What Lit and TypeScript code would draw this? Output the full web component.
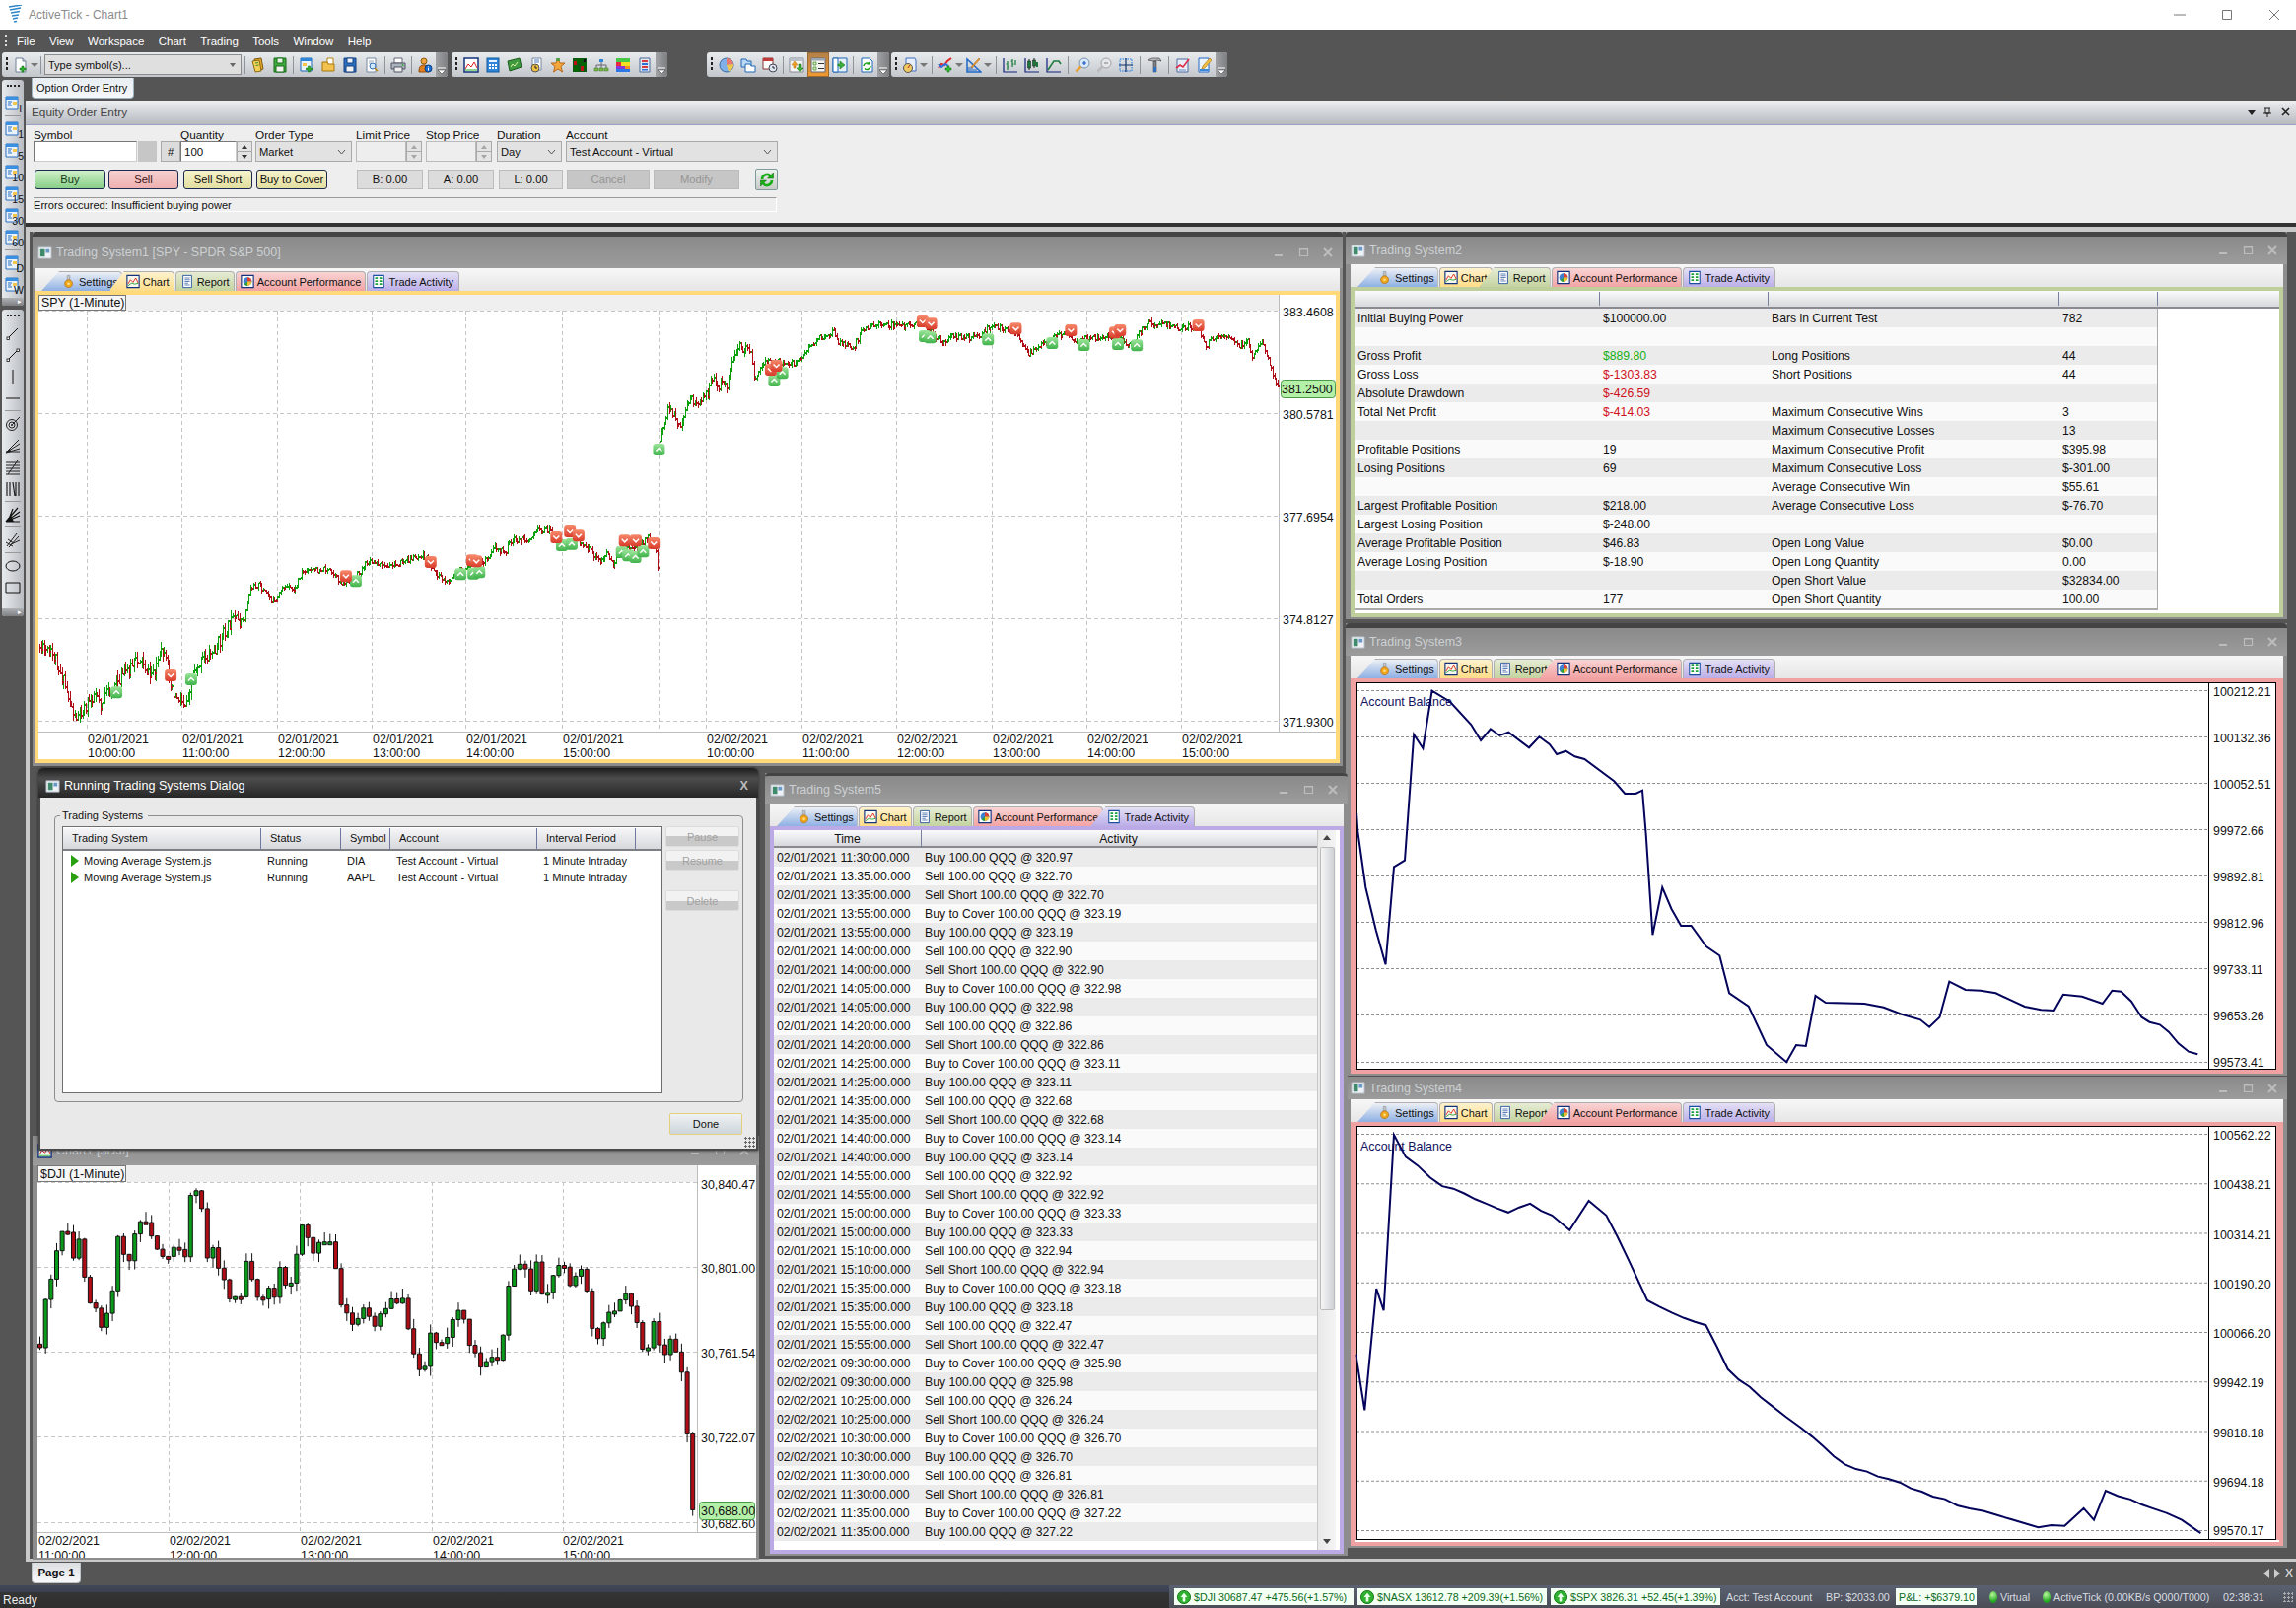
import { LitElement, html, svg, css } from "lit";
import { customElement } from "lit/decorators.js";

type P = [number, number];
const mapZ = (pts: number[][], ox: number, sx: number, oy: number): P[] => pts.map(([a, b]) => [ox + a * sx, oy + b / 3] as P);
const interp = (pts: P[], x: number) => {
  if (x <= pts[0][0]) return pts[0][1];
  for (let i = 1; i < pts.length; i++) {
    if (x <= pts[i][0]) {
      const [a, b] = pts[i - 1], [c, d] = pts[i];
      return b + ((d - b) * (x - a)) / (c - a || 1);
    }
  }
  return pts[pts.length - 1][1];
};
const rng = (s: number) => () => {
  s |= 0; s = (s + 0x6d2b79f5) | 0;
  let t = Math.imul(s ^ (s >>> 15), 1 | s);
  t = (t + Math.imul(t ^ (t >>> 7), 61 | t)) ^ t;
  return ((t ^ (t >>> 14)) >>> 0) / 4294967296;
};
const lineD = (pts: P[]) => "M" + pts.map((p) => `${p[0].toFixed(1)} ${p[1].toFixed(1)}`).join("L");
const jitter = (pts: P[], seed: number, amt: number): P[] => {
  const r = rng(seed);
  const out: P[] = [pts[0]];
  for (let i = 1; i < pts.length; i++) {
    const [a, b] = pts[i - 1], [c, d] = pts[i];
    const n = Math.floor((c - a) / 11);
    for (let k = 1; k < n; k++) out.push([a + ((c - a) * k) / n, b + ((d - b) * k) / n + (r() - 0.5) * amt]);
    out.push(pts[i]);
  }
  return out;
};

const day1 = mapZ([[24,1100],[60,1130],[105,1310],[130,1280],[155,1230],[165,1270],[205,1200],[260,1130],[280,1190],[310,1115],[340,1245],[365,1270],[385,1160],[430,1110],[470,1025],[500,1020],[515,920],[535,908],[575,970],[590,915],[620,925],[635,870],[695,860],[725,900],[750,905],[790,840],[840,855],[920,815],[945,870],[975,900],[1020,850],[1070,835],[1085,790],[1110,815],[1125,775],[1170,770],[1180,745],[1215,740],[1235,790],[1290,780],[1335,840],[1350,810],[1365,855],[1380,800],[1420,800],[1445,765],[1465,800],[1470,880]], 30, 0.4337, 290);
const day2 = [...mapZ([[1472,480],[1495,370],[1525,430]], 30, 0.4337, 290), ...mapZ([[45,330],[60,370],[90,320],[95,290],[130,310],[155,178],[190,205],[193,285],[220,230],[290,235],[345,160],[380,140],[395,175],[430,185],[445,135],[485,120],[550,120],[590,110],[635,175],[650,155],[720,155],[750,120],[800,135],[835,205],[890,165],[925,135],[945,170],[980,155],[1040,155],[1075,180],[1115,115],[1155,115],[1195,130],[1230,120],[1255,185],[1265,155],[1310,150],[1330,180],[1350,170],[1360,210],[1385,175],[1400,235],[1420,315]], 680, 0.4337, 290)];

function genBars(pts: P[], x0: number, x1: number, seed: number) {
  const r = rng(seed);
  let up = "", dn = "";
  let prev = interp(pts, x0);
  for (let x = x0; x <= x1; x += 1.62) {
    const amp = x < 245 ? 7 : x < 760 && x > 668 ? 5 : 3;
    const c = interp(pts, x) + (r() - 0.5) * amp * 2;
    const hi = Math.min(prev, c) - r() * amp * 1.1;
    const lo = Math.max(prev, c) + r() * amp * 1.1;
    const X = Math.round(x) + 0.5;
    const seg = `M${X} ${hi.toFixed(0)}V${lo.toFixed(0)}M${X - 1} ${prev.toFixed(0)}h1M${X} ${c.toFixed(0)}h1`;
    if (c < prev) up += seg; else dn += seg;
    prev = c;
  }
  return [up, dn];
}
const [u1, d1] = genBars(day1, 40, 667.5, 11);
const [u2, d2] = genBars(day2, 669, 1296, 27);

const buys: P[] = [...mapZ([[203,1237],[378,1197],[763,898],[1008,877],[1038,875],[1052,871],[1245,789],[1268,785],[1385,810],[1400,820],[1417,825],[1435,808],[1472,498]], 30, 0.4337, 290), ...mapZ([[243,288],[262,265],[595,153],[608,157],[743,163],[893,174],[967,180],[1047,177],[1091,181]], 680, 0.4337, 290)];
const sells: P[] = [...mapZ([[330,1185],[740,883],[938,840],[1035,835],[1045,838],[1232,765],[1264,747],[1284,760],[1392,775],[1418,775],[1460,783]], 30, 0.4337, 290), ...mapZ([[235,255],[248,243],[590,108],[610,115],[808,130],[937,135],[1040,142],[1052,135],[1235,120]], 680, 0.4337, 290)];

const djiPts = mapZ([[22,640],[30,520],[45,430],[60,370],[72,270],[90,350],[105,380],[110,290],[120,490],[135,470],[150,540],[165,580],[180,430],[190,300],[210,400],[225,320],[245,270],[260,320],[290,360],[310,310],[335,340],[345,220],[365,190],[375,320],[380,350],[400,390],[415,470],[440,510],[470,410],[490,490],[525,490],[540,435],[555,530],[575,350],[585,290],[605,385],[630,295],[650,360],[665,485],[685,580],[720,560],[735,605],[770,520],[805,530],[815,600],[835,770],[860,630],[890,640],[930,540],[950,630],[970,725],[1000,690],[1020,590],[1030,460],[1048,370],[1070,455],[1095,420],[1108,495],[1145,370],[1160,460],[1190,420],[1210,580],[1225,640],[1235,530],[1260,550],[1290,485],[1305,600],[1320,675],[1345,570],[1360,710],[1375,620],[1400,710],[1410,860],[1420,1015],[1425,1145],[1430,1180]], 30, 0.4719, 1150);
function genCandles() {
  const r = rng(5);
  let wick = "", up = "", dn = "";
  let prev = interp(djiPts, 40);
  for (let x = 40.5; x <= 705; x += 5.66) {
    const amp = x > 680 ? 6 : 26;
    const c = interp(djiPts, x) + (r() - 0.5) * amp;
    const top = Math.min(prev, c), bot = Math.max(prev, c);
    const hi = top - r() * 10, lo = bot + r() * 10;
    wick += `M${x.toFixed(1)} ${hi.toFixed(1)}V${lo.toFixed(1)}`;
    const b = `M${(x - 2).toFixed(1)} ${top.toFixed(1)}h4V${Math.max(bot, top + 3).toFixed(1)}h-4Z`;
    if (c < prev) up += b; else dn += b;
    prev = c;
  }
  return [wick, up, dn];
}
const [dw, du, dd] = genCandles();

const acct3 = mapZ([[10,585],[12,640],[25,810],[42,940],[58,1045],[72,748],[90,728],[105,345],[120,387],[135,212],[165,245],[200,315],[216,363],[232,328],[247,348],[262,338],[296,385],[313,352],[330,375],[342,405],[357,395],[372,412],[388,420],[437,487],[455,525],[473,525],[484,515],[490,650],[501,955],[517,810],[532,875],[548,927],[565,927],[590,990],[612,1018],[628,1132],[660,1172],[690,1290],[723,1342],[739,1290],[755,1293],[771,1140],[788,1161],[852,1164],[884,1175],[915,1197],[945,1213],[960,1235],[977,1205],[993,1097],[1020,1122],[1045,1124],[1070,1132],[1118,1173],[1145,1183],[1167,1185],[1182,1136],[1213,1142],[1247,1164],[1263,1124],[1278,1127],[1295,1157],[1312,1205],[1325,1220],[1342,1228],[1357,1250],[1373,1285],[1390,1310],[1405,1318]], 1370, 0.6116, 630);
const acct4: P[] = jitter([[926,925],[932,963],[940,880],[945,895],[952,775],[960,790],[985,810],[1000,815],[1030,828],[1045,822],[1060,830],[1072,840],[1085,820],[1097,830],[1112,860],[1125,888],[1150,900],[1165,905],[1180,935],[1210,960],[1230,975],[1260,1000],[1290,1010],[1320,1022],[1345,1030],[1365,1035],[1392,1043],[1410,1042],[1423,1030],[1430,1038],[1438,1018],[1455,1024],[1470,1030],[1490,1038],[1503,1047]].map(([a, b]) => [a * 1.4853, b * 1.4853] as P), 9, 3);

const D = "02/01/2021", E = "02/02/2021";
const ACT: [string, string, string, string][] = [
  [D,"11:30","Buy","320.97"],[D,"13:35","Sell","322.70"],[D,"13:35","Sell Short","322.70"],[D,"13:55","Buy to Cover","323.19"],
  [D,"13:55","Buy","323.19"],[D,"14:00","Sell","322.90"],[D,"14:00","Sell Short","322.90"],[D,"14:05","Buy to Cover","322.98"],
  [D,"14:05","Buy","322.98"],[D,"14:20","Sell","322.86"],[D,"14:20","Sell Short","322.86"],[D,"14:25","Buy to Cover","323.11"],
  [D,"14:25","Buy","323.11"],[D,"14:35","Sell","322.68"],[D,"14:35","Sell Short","322.68"],[D,"14:40","Buy to Cover","323.14"],
  [D,"14:40","Buy","323.14"],[D,"14:55","Sell","322.92"],[D,"14:55","Sell Short","322.92"],[D,"15:00","Buy to Cover","323.33"],
  [D,"15:00","Buy","323.33"],[D,"15:10","Sell","322.94"],[D,"15:10","Sell Short","322.94"],[D,"15:35","Buy to Cover","323.18"],
  [D,"15:35","Buy","323.18"],[D,"15:55","Sell","322.47"],[D,"15:55","Sell Short","322.47"],[E,"09:30","Buy to Cover","325.98"],
  [E,"09:30","Buy","325.98"],[E,"10:25","Sell","326.24"],[E,"10:25","Sell Short","326.24"],[E,"10:30","Buy to Cover","326.70"],
  [E,"10:30","Buy","326.70"],[E,"11:30","Sell","326.81"],[E,"11:30","Sell Short","326.81"],[E,"11:35","Buy to Cover","327.22"],
  [E,"11:35","Buy","327.22"],
];
const REPORT: [string, string, string, string, string?][] = [
  ["Initial Buying Power","$100000.00","Bars in Current Test","782"],["","","",""],
  ["Gross Profit","$889.80","Long Positions","44","g"],["Gross Loss","$-1303.83","Short Positions","44","r"],
  ["Absolute Drawdown","$-426.59","","","r"],["Total Net Profit","$-414.03","Maximum Consecutive Wins","3","r"],
  ["","","Maximum Consecutive Losses","13"],["Profitable Positions","19","Maximum Consecutive Profit","$395.98"],
  ["Losing Positions","69","Maximum Consecutive Loss","$-301.00"],["","","Average Consecutive Win","$55.61"],
  ["Largest Profitable Position","$218.00","Average Consecutive Loss","$-76.70"],["Largest Losing Position","$-248.00","",""],
  ["Average Profitable Position","$46.83","Open Long Value","$0.00"],["Average Losing Position","$-18.90","Open Long Quantity","0.00"],
  ["","","Open Short Value","$32834.00"],["Total Orders","177","Open Short Quantity","100.00"],
];

const ICONS: Record<string, any> = {
  newdoc: svg`<path d="M3 1h7l3 3v11H3z" fill="#fff" stroke="#6f7f98"/><path d="M10 1v3h3" fill="#cfd8e6" stroke="#6f7f98"/><path d="M9 9h2v2h2v2h-2v2H9v-2H7v-2h2z" fill="#2fae2f" stroke="#0b6b0b" stroke-width=".5"/>`,
  stack: svg`<path d="M4 2l7-1 2 11-7 2z" fill="#e9a92c" stroke="#7a5a10"/><path d="M2 4l7-1 2 11-6 1z" fill="#f4cf55" stroke="#8a6a10"/><path d="M5 6l3-.5M5.5 8.5l3-.5" stroke="#3b8f3b"/>`,
  floppyG: svg`<path d="M2 1h12v14H2z" fill="#3faa3f" stroke="#176a17"/><path d="M5 1h6v5H5z" fill="#e9f5e9" stroke="#176a17"/><path d="M4 9h8v6H4z" fill="#f2f2f2" stroke="#176a17"/>`,
  winplus: svg`<path d="M2 1h11v13H2z" fill="#eaf2fb" stroke="#1f68b8"/><path d="M2 1h11v3H2z" fill="#2f86d8"/><path d="M4 6h4v3H4z" fill="#f6c64a"/><path d="M9.500 9h2v2h2v2h-2v2h-2v-2h-2v-2h2z" fill="#2fae2f" stroke="#0b6b0b" stroke-width=".5"/>`,
  folderdoc: svg`<path d="M7 1h6v9H7z" fill="#fff" stroke="#b8860b"/><path d="M2 5h5l1 2h6v7H2z" fill="#f2c14e" stroke="#a8760b"/>`,
  floppyB: svg`<path d="M2 1h12v14H2z" fill="#2c6fc0" stroke="#123f80"/><path d="M5 1h6v5H5z" fill="#eef3fb" stroke="#123f80"/><path d="M4 9h8v6H4z" fill="#f2f2f2" stroke="#123f80"/>`,
  docmag: svg`<path d="M3 1h9v14H3z" fill="#fff" stroke="#7788a0"/><path d="M5 4h5M5 6h3" stroke="#9ab"/><circle cx="9" cy="9" r="3" fill="#cfe6fb" stroke="#2f6fb8"/><path d="M11 11l3 3" stroke="#b8860b" stroke-width="1.5"/>`,
  printer: svg`<path d="M4 1h8v5H4z" fill="#fff" stroke="#667"/><path d="M1 6h14v6H1z" fill="#aab2bc" stroke="#556"/><path d="M4 10h8v5H4z" fill="#eee" stroke="#556"/><circle cx="12.500" cy="8" r="1" fill="#3a3"/>`,
  person: svg`<circle cx="7" cy="4" r="3" fill="#f0a23c" stroke="#8a5a10"/><path d="M2 15c0-6 2-7 5-7s5 1 5 7z" fill="#e07f1e" stroke="#8a4a10"/><circle cx="11.500" cy="11.500" r="3.500" fill="#1c6fd0" stroke="#0b3a80"/><path d="M11.500 9.500v.8M11.500 11v2.600" stroke="#fff"/>`,
  chartwin: svg`<path d="M1 1h14v14H1z" fill="#fff" stroke="#12327c" stroke-width="1.500"/><path d="M2 12l3-5 3 3 3-5 3 6" fill="none" stroke="#d22" /><path d="M2 13h12" stroke="#2a2"/>`,
  calc: svg`<rect x="2" y="1" width="12" height="14" fill="#2f86d8" stroke="#125aa0"/><path d="M4 3h8v2H4z" fill="#e8f3ff"/><path d="M4 7h2v2H4zM7 7h2v2H7zM10 7h2v2h-2zM4 10h2v2H4zM7 10h2v2H7zM10 10h2v2h-2z" fill="#fff"/>`,
  greentile: svg`<path d="M1 4l12-3 2 9-12 4z" fill="#3f9a3f" stroke="#1a5a1a"/><path d="M4 10l2-3 2 2 3-4" fill="none" stroke="#dff5a0"/>`,
  docclock: svg`<path d="M4 1h9v12H4z" fill="#fff" stroke="#7788a0"/><path d="M6 3h5M6 5h5" stroke="#4a7ac0"/><circle cx="7" cy="11" r="4" fill="#f0c040" stroke="#555"/><path d="M7 8.500V11h2" stroke="#222" fill="none"/>`,
  star: svg`<path d="M8 1l2 5h5l-4 3.500 1.500 5.500L8 12l-4.500 3L5 9.500 1 6h5z" fill="#f4a83c" stroke="#b8661a"/><path d="M6 1h4v3H6z" fill="#3aa03a" opacity=".8"/>`,
  heat: svg`<path d="M1 1h14v14H1z" fill="#0a5a12"/><path d="M5 2h4v4H5zM10 6h4v5h-4zM2 10h4v4H2z" fill="#060"/><path d="M9 9h3v5H9zM2 4h3v4H2z" fill="#c01018"/><path d="M12 2h2v3h-2z" fill="#111"/>`,
  tree: svg`<path d="M8 5v3M3 11V8h10v3M8 8v3" fill="none" stroke="#667"/><path d="M6 2h4v3H6z" fill="#2f86d8"/><path d="M1 11h4v3H1zM6 11h4v3H6zM11 11h4v3h-4z" fill="#7ab648" stroke="#3a7a20" stroke-width=".5"/>`,
  colorgrid: svg`<path d="M1 1h14v4H1z" fill="#48c848"/><path d="M1 5h5v4H1z" fill="#e8283c"/><path d="M6 5h9v4H6z" fill="#f4e020"/><path d="M1 9h9v3H1z" fill="#8838d8"/><path d="M10 9h5v3h-5z" fill="#f49020"/><path d="M1 12h14v3H1z" fill="#2878e8"/>`,
  listc: svg`<path d="M3 1h10v14H3z" fill="#dfe8f3" stroke="#4a6a9a"/><path d="M5 3h6v2H5z" fill="#d83a3a"/><path d="M5 6h6v2H5z" fill="#2f6fd8"/><path d="M5 9h6v2H5z" fill="#d83a3a"/><path d="M5 12h6v1.500H5z" fill="#2f6fd8"/>`,
  pie: svg`<circle cx="8" cy="8" r="7" fill="#7fb0e8" stroke="#3a6aa0"/><path d="M8 8V1a7 7 0 0 1 7 6z" fill="#e87870"/><path d="M8 8l7-1a7 7 0 0 1-5 7.500z" fill="#f0c850"/>`,
  folders: svg`<path d="M1 2h5l1 2h4v6H1z" fill="#bcd8f5" stroke="#1f68b8"/><path d="M5 7h5l1 2h4v6H5z" fill="#fff" stroke="#1f68b8"/>`,
  calclock: svg`<path d="M1 1h10v11H1z" fill="#fff" stroke="#8a3030"/><path d="M1 1h10v3H1z" fill="#c03a3a"/><circle cx="11" cy="11" r="4" fill="#dfe6ef" stroke="#445"/><path d="M11 9v2h2" stroke="#223" fill="none"/>`,
  winarrows: svg`<path d="M1 1h14v14H1z" fill="#f4f4f0" stroke="#889"/><path d="M1 1h14v3H1z" fill="#b9c0c8"/><path d="M5 11V8H3l3-4 3 4H7v3z" fill="#f0a020" stroke="#b06a10" stroke-width=".5"/><path d="M10 7v4H8l3.500 4 3.500-4h-2V7z" fill="#3ab03a" stroke="#0f6a0f" stroke-width=".5"/>`,
  check: svg`<path d="M1 1h14v14H1z" fill="#f4f4f0" stroke="#667"/><path d="M1 1h14v2.500H1z" fill="#9aa6b2"/><path d="M3 5h3v3H3zM3 10h3v3H3z" fill="#cfe8c0" stroke="#3a8a20" stroke-width=".7"/><path d="M8 6.500h6M8 11.500h6" stroke="#333"/>`,
  winarrow: svg`<path d="M1 1h14v14H1z" fill="#e6eef6" stroke="#1f68b8"/><path d="M1 1h5v14H1z" fill="#fff" stroke="#1f68b8"/><path d="M8 4v3H6v2h2v3l5-4z" fill="#3ab03a" stroke="#0f6a0f" stroke-width=".5"/>`,
  docrefresh: svg`<path d="M3 1h8l3 3v11H3z" fill="#fff" stroke="#1f68b8"/><path d="M5 9a3.500 3.500 0 0 1 6-2M12 9a3.500 3.500 0 0 1-6 2.500" fill="none" stroke="#17a017" stroke-width="1.500"/><path d="M11 4.500v3H8z" fill="#17a017"/>`,
  docgauge: svg`<path d="M4 1h9l1 2v11H4z" fill="#e7eefa" stroke="#3f6fc0"/><circle cx="6" cy="11" r="4.500" fill="#f0c860" stroke="#555"/><path d="M6 11l2-3" stroke="#c02020"/>`,
  chartplus: svg`<path d="M1 11l3-4 3 1 3-4 4-3" fill="none" stroke="#e02a2a" stroke-width="2"/><path d="M1 7l3 3 4-3 3 2" fill="none" stroke="#2f6fd8" stroke-width="2"/><path d="M10 9h2v2h2v2h-2v2h-2v-2H8v-2h2z" fill="#2fc02f" stroke="#0b6b0b" stroke-width=".5"/>`,
  rulerpen: svg`<path d="M1 2v13h14z" fill="none" stroke="#1f68c8" stroke-width="1.500"/><path d="M1 11h6M1 13h10" stroke="#1f68c8"/><path d="M5 10l8-9 1 1-8 9z" fill="#f0a030" stroke="#a05a10" stroke-width=".5"/>`,
  bars: svg`<path d="M1 1v14h14" fill="none" stroke="#12227c" stroke-width="1.200"/><path d="M5 4v9M3.500 7H5M5 10h1.500M10 2v8M8.500 4H10M10 7h1.500M13 3v5" fill="none" stroke="#1a7a3a" stroke-width="1.200"/>`,
  candles: svg`<path d="M1 1v14h14" fill="none" stroke="#12227c" stroke-width="1.200"/><path d="M5 2v11M10 1v10" stroke="#222"/><path d="M3.500 4h3v7h-3zM8.500 3h3v6h-3z" fill="#1a7a3a" stroke="#111" stroke-width=".5"/><path d="M13 5v5" stroke="#1a7a3a" stroke-width="2"/>`,
  line: svg`<path d="M1 1v14h14" fill="none" stroke="#12227c" stroke-width="1.200"/><path d="M2 13l6-9 5 0 2 3" fill="none" stroke="#1a7a3a" stroke-width="1.500"/>`,
  zoomin: svg`<circle cx="10" cy="6" r="5" fill="#d8e9fb" stroke="#7a93b0"/><path d="M8 6h4M10 4v4" stroke="#1a56c0" stroke-width="1.200"/><path d="M6.500 9.500l-5 5" stroke="#e8a030" stroke-width="2.500"/>`,
  zoomout: svg`<circle cx="10" cy="6" r="5" fill="#e4e6e8" stroke="#a0a4a8"/><path d="M8 6h4" stroke="#8a8e92" stroke-width="1.200"/><path d="M6.500 9.500l-5 5" stroke="#b8babc" stroke-width="2.500"/>`,
  cross: svg`<path d="M2 2h12v12H2z" fill="none" stroke="#1a78e8" stroke-dasharray="1.500 1"/><path d="M8 1v14M1 8h14" stroke="#10306a" stroke-width="1.200"/>`,
  hammer: svg`<path d="M1 3l5-2h7l2 3-4-1-3 1z" fill="#b8bcc0" stroke="#444" stroke-width=".7"/><path d="M7 4h3v11H7z" fill="#7c8086" stroke="#333" stroke-width=".5"/><path d="M7 10h3v5H7z" fill="#2f6fc0"/>`,
  notes: svg`<path d="M2 2h11v13H2z" fill="#e8eef8" stroke="#4a6aa0"/><path d="M1 11l4-3 3 2 6-8" fill="none" stroke="#e02a4a" stroke-width="1.600"/><path d="M4 13h7" stroke="#6a8ac0"/>`,
  pencil: svg`<path d="M2 1h10v14H2z" fill="#eef4fb" stroke="#1f68c8"/><path d="M5 12l1-3 7-8 2 2-7 8z" fill="#f4c040" stroke="#a06a10" stroke-width=".6"/><path d="M3 13h9" stroke="#3a8ad8" stroke-width="2"/>`,
  gear: svg`<path d="M6 1h3v7H6z" fill="#c0c4c8" stroke="#777" stroke-width=".5"/><path d="M7.500 6a4.500 4.500 0 1 0 .01 0z" fill="#f0a820" stroke="#b06a10" stroke-width=".8"/><circle cx="7.500" cy="10.500" r="1.500" fill="#ffe080"/>`,
  tabchart: svg`<path d="M1 1h14v14H1z" fill="#f8f8ee" stroke="#12327c" stroke-width="1.300"/><path d="M2 11l3-5 3 3 3-5 3 6" fill="none" stroke="#e0301c" stroke-width="1.100"/><path d="M2 13l4-3 4 1 4-1" fill="none" stroke="#1fa02f"/>`,
  tabrep: svg`<path d="M3 1h10v14H3z" fill="#fff" stroke="#1f4f9c"/><path d="M5 4h6M5 6h6M5 8h6M5 10h4M5 12h6" stroke="#1f4f9c" stroke-width=".8"/>`,
  tabpie: svg`<path d="M1 1h14v14H1z" fill="#fff" stroke="#12327c" stroke-width="1.300"/><circle cx="8" cy="8" r="5" fill="#3f7fd0"/><path d="M8 8V3a5 5 0 0 1 5 5z" fill="#e04030"/><path d="M8 8h5a5 5 0 0 1-5 5z" fill="#f0c030"/><path d="M8 8v5a5 5 0 0 1-4-2z" fill="#30a040"/>`,
  tabgrid: svg`<path d="M2 1h12v14H2z" fill="#fff" stroke="#1b4fa0" stroke-width="1.200"/><path d="M4 3h3v2H4zM9 3h3v2H9zM4 6.500h3v2H4zM9 6.500h3v2H9zM4 10h3v2H4zM9 10h3v2H9z" fill="#1aa03a"/>`,
  win: svg`<path d="M1 2h14v12H1z" fill="#eef2f6" stroke="#b0b8c0"/><path d="M3 4h5v8H3z" fill="#3f8a6a"/><path d="M9 4h4v4H9z" fill="#6a98c8"/>`,
  tf: svg`<path d="M1 1h12v13H1z" fill="#eaf2fb" stroke="#2a6fc0"/><path d="M1 1h12v3H1z" fill="#3a90e0"/><path d="M3 6h4M3 8h3M3 10h4" stroke="#2a6fc0"/><path d="M8 6h4v3H8z" fill="#f6c64a"/>`,
  seg: svg`<path d="M3 13L13 3" stroke="#111"/><rect x="2" y="12" width="2.500" height="2.500" fill="#fff" stroke="#111" stroke-width=".8"/>`,
  seg2: svg`<path d="M3 13L13 3" stroke="#111"/><rect x="2" y="12" width="2.500" height="2.500" fill="#fff" stroke="#111" stroke-width=".8"/><rect x="12" y="2" width="2.500" height="2.500" fill="#fff" stroke="#111" stroke-width=".8"/>`,
  vert: svg`<path d="M8 1v14" stroke="#111"/>`,
  horz: svg`<path d="M1 8h14" stroke="#111"/>`,
  target: svg`<circle cx="7" cy="9" r="5.500" fill="none" stroke="#222"/><circle cx="7" cy="9" r="3" fill="none" stroke="#222"/><circle cx="7" cy="9" r="1" fill="#222"/><path d="M7 9l8-8" stroke="#222"/>`,
  fan: svg`<path d="M1 15L14 2M1 15L15 6M1 15L15 11M1 14h14" fill="none" stroke="#222"/><path d="M1 15l4-4 1 3z" fill="#222"/>`,
  fib: svg`<path d="M1 3h14M1 6h14M1 9h14M1 12h14M1 15h14M3 15L13 1" fill="none" stroke="#222"/>`,
  vlines: svg`<path d="M2 1v14M5 1v14M8 1L10 15M11 1v14M14 1v14" fill="none" stroke="#222" stroke-width="1.200"/>`,
  speed: svg`<path d="M1 15L13 1M1 15L15 5M1 15L15 9M1 15h14M3 15L8 2" fill="none" stroke="#111" stroke-width="1.200"/><path d="M1 15l5-6 3 6z" fill="#111"/>`,
  fork: svg`<path d="M2 14L12 1M4 15L14 4M1 10L8 14M6 12L15 8M3 7l6 4" fill="none" stroke="#222"/>`,
  oval: svg`<ellipse cx="8" cy="8" rx="7" ry="5" fill="none" stroke="#111"/>`,
  rect: svg`<path d="M1 3h14v10H1z" fill="none" stroke="#111"/>`,
  refresh: svg`<path d="M3 8a5 5 0 0 1 9-3" fill="none" stroke="#18b018" stroke-width="2.600"/><path d="M14.500 1v6h-6z" fill="#18b018" stroke="#0b5b0b" stroke-width=".5"/><path d="M13 9a5 5 0 0 1-9 3" fill="none" stroke="#18b018" stroke-width="2.600"/><path d="M1.500 15V9h6z" fill="#18b018" stroke="#0b5b0b" stroke-width=".5"/>`,
  uparrow: svg`<circle cx="8" cy="8" r="7.500" fill="#30b030" stroke="#0f6f0f"/><path d="M8 3l4 5H9.500v5h-3V8H4z" fill="#eaffea"/>`,
};
const ic = (n: string, cls = "ic") => html`<svg class=${cls} viewBox="0 0 16 16">${ICONS[n]}</svg>`;
const btn = (n: string, extra = "") => html`<span class="tb ${extra}">${ic(n)}</span>`;
const wideBtn = (n: string) => html`<span class="tb wide">${ic(n)}<i class="arr"></i></span>`;
const sep = html`<span class="sep"></span>`;
const tbEnd = html`<span class="tbend"><svg viewBox="0 0 10 10" class="more"><path d="M1 3h8" stroke="#fff"/><path d="M1 5h8L5 9z" fill="#fff" stroke="#333" stroke-width=".5"/></svg></span>`;

const TABS = [["Settings","gear","ts"],["Chart","tabchart","tc"],["Report","tabrep","tr"],["Account Performance","tabpie","ta"],["Trade Activity","tabgrid","tt"]];
const tabs = (active: number) => html`<div class="tabs">${TABS.map((t, i) => html`<div class="tab ${t[2]} ${i === active ? "on" : ""}">${ic(t[1], "tic")}<span>${t[0]}</span></div>`)}</div>`;
const winCtl = html`<span class="ctl"><svg viewBox="0 0 66 12" class="ctlsvg"><path d="M2 9h8" stroke="currentColor" stroke-width="2"/><path d="M27.500 2.500h8v7h-8z M27 3h9" fill="none" stroke="currentColor" stroke-width="1.200"/><path d="M52 2l8 8M60 2l-8 8" stroke="currentColor" stroke-width="2"/></svg></span>`;

const grid = svg`
  <linearGradient id="gG" x1="0" y1="0" x2="0" y2="1"><stop offset="0" stop-color="#9ce59a"/><stop offset="1" stop-color="#3fb24a"/></linearGradient>
  <linearGradient id="gR" x1="0" y1="0" x2="0" y2="1"><stop offset="0" stop-color="#f78a6c"/><stop offset="1" stop-color="#d83a2a"/></linearGradient>`;

const Xs1 = [88.5,184.5,281.5,377.5,472.5,570.5,668.5,716.5,813.5,909.5,1006.5,1102.5,1198.5];
const Ys1 = [315,419,523,627,731];
const Xl1: [number,string,string][] = [[89,D,"10:00:00"],[185,D,"11:00:00"],[282,D,"12:00:00"],[378,D,"13:00:00"],[473,D,"14:00:00"],[571,D,"15:00:00"],[717,E,"10:00:00"],[814,E,"11:00:00"],[910,E,"12:00:00"],[1007,E,"13:00:00"],[1103,E,"14:00:00"],[1199,E,"15:00:00"]];
const Yl1: [number,string][] = [[321,"383.4608"],[425,"380.5781"],[529,"377.6954"],[633,"374.8127"],[737,"371.9300"]];

function spyChart() {
  return html`<svg class="plot" width="1316" height="475" viewBox="39 299 1316 475">
    <defs>${grid}</defs>
    <rect x="39" y="299" width="1316" height="471" fill="#fff"/>
    <rect x="39" y="770" width="1316" height="4" fill="var(--band)"/>
    <rect x="39" y="299" width="1258" height="16" fill="#efefef"/>
    <g class="grid">
      ${Ys1.map((y) => svg`<path d="M39 ${y + 0.5}H1297"/>`)}
      ${Xs1.map((x) => svg`<path d="M${x} 315V742"/>`)}
    </g>
    <path d="M39 742.500H1355M1297.500 299V742" class="axis"/>
    <path d=${u1} class="up"/><path d=${d1} class="dn"/><path d=${u2} class="up"/><path d=${d2} class="dn"/>
    ${buys.map((p) => svg`<g><rect x=${p[0] - 6} y=${p[1] - 6} width="12" height="12" rx="3" fill="url(#gG)"/><path d="M${p[0] - 3} ${p[1] + 1.5}l3 -3l3 3" class="chev"/></g>`)}
    ${sells.map((p) => svg`<g><rect x=${p[0] - 6} y=${p[1] - 6} width="12" height="12" rx="3" fill="url(#gR)"/><path d="M${p[0] - 3} ${p[1] - 1.5}l3 3l3 -3" class="chev"/></g>`)}
    <rect x="39.500" y="299.500" width="88" height="15" fill="#f6f6f6" stroke="#777"/>
    <text x="42" y="311" class="t">SPY (1-Minute)</text>
    ${Xl1.map((l) => svg`<text x=${l[0]} y="754" class="t">${l[1]}</text><text x=${l[0]} y="768" class="t">${l[2]}</text>`)}
    ${Yl1.map((l) => svg`<text x="1301" y=${l[0]} class="t">${l[1]}</text>`)}
    <rect x="1299.500" y="385.500" width="55" height="18" rx="3" fill="#b4f0a8" stroke="#4a9a4a"/>
    <text x="1300" y="399" class="t">381.2500</text>
  </svg>`;
}
function djiChart() {
  const xs = [171.5,304.5,438.5,571.5];
  const ys = [1199,1285,1371,1457,1544];
  const xl = [39,172,305,439,571];
  const tm = ["11:00:00","12:00:00","13:00:00","14:00:00","15:00:00"];
  const yl: [number,string][] = [[1206,"30,840.47"],[1291,"30,801.00"],[1377,"30,761.54"],[1463,"30,722.07"],[1550,"30,682.60"]];
  return html`<svg class="plot" width="729" height="398" viewBox="38 1182 729 398">
    <rect x="38" y="1182" width="729" height="398" fill="#fff"/>
    <rect x="38" y="1182" width="669" height="17" fill="#efefef"/>
    <g class="grid">
      ${ys.map((y) => svg`<path d="M38 ${y + 0.5}H707"/>`)}
      ${xs.map((x) => svg`<path d="M${x} 1199V1554"/>`)}
    </g>
    <path d="M38 1554.500H767M707.500 1182V1554" class="axis"/>
    <path d=${dw} stroke="#111" stroke-width="1" fill="none"/>
    <path d=${du} fill="#0a9a1a" stroke="#111" stroke-width="1"/>
    <path d=${dd} fill="#b00c16" stroke="#111" stroke-width="1"/>
    <rect x="38.500" y="1182.500" width="89" height="16" fill="#f6f6f6" stroke="#777"/>
    <text x="41" y="1195" class="t">$DJI (1-Minute)</text>
    ${xl.map((x, i) => svg`<text x=${x} y="1567" class="t">${E}</text><text x=${x} y="1582" class="t">${tm[i]}</text>`)}
    ${yl.map((l) => svg`<text x="711" y=${l[0]} class="t">${l[1]}</text>`)}
    <rect x="709.500" y="1523.500" width="56" height="18" rx="3" fill="#b4f0a8" stroke="#4a9a4a"/>
    <text x="711" y="1537" class="t">30,688.00</text>
  </svg>`;
}
function acctChart(y0: number, y1: number, pts: P[], ys: number[], labels: string[], txtY: number) {
  const h = y1 - y0;
  return html`<svg class="plot" width="938" height=${h} viewBox="1374 ${y0} 938 ${h}">
    <rect x="1374" y=${y0} width="938" height=${h} fill="var(--band)"/>
    <rect x="1375.500" y=${y0 + 0.5} width="933" height=${h - 1} fill="#fff" stroke="#000"/>
    <g class="gridh">${ys.map((y) => svg`<path d="M1376 ${y + 0.5}H2240"/>`)}</g>
    <path d="M2240.500 ${y0}V${y1}" stroke="#000" fill="none"/>
    <text x=${1380} y=${txtY} class="t navy">Account Balance</text>
    <path d=${lineD(pts)} fill="none" stroke="#04045c" stroke-width="2"/>
    ${ys.map((y, i) => svg`<text x="2245" y=${y + (i === ys.length - 1 ? 4.5 : 6)} class="t">${labels[i]}</text>`)}
  </svg>`;
}

@customElement("app-root")
export class AppRoot extends LitElement {
  static styles = css`
    :host { display: block; width: 2329px; height: 1631px; overflow: hidden; background: #555; color: #111; font: 12.2px "Liberation Sans", Arial, sans-serif; }
    * { box-sizing: border-box; }
    .page { display: flex; flex-direction: column; height: 1631px; }
    .ic { width: 16px; height: 16px; display: block; flex: none; }
    .titlebar { height: 30px; background: #fff; display: flex; align-items: center; padding-left: 8px; color: #8b8b8b; font-size: 12px; flex: none; }
    .logo { width: 16px; height: 20px; margin-right: 5px; }
    .sysctl { margin-left: auto; display: flex; gap: 0; color: #777; }
    .sysctl span { width: 48px; display: flex; justify-content: center; }
    .sysctl svg { width: 12px; height: 12px; }
    .sysctl span:last-child { margin-right: -2px; }
    .menubar { height: 23px; flex: none; display: flex; align-items: center; color: #fff; padding-left: 5px; font-size: 11.500px; }
    .mgrip { width: 2px; height: 11px; border-left: 2px dotted #ddd; margin-right: 10px; }
    .menubar span { margin-right: 14.400px; }
    .tools { height: 26px; flex: none; display: flex; padding-left: 2px; }
    .tbar { height: 25px; display: flex; align-items: center; background: linear-gradient(#e8ebee, #c3c7cb); border-radius: 3px; margin-right: 4px; position: relative; }
    .t3 { margin-left: 36px; margin-right: 2px; }
    .t4 .sep { margin: 0 3px; }
    .grip { width: 9px; flex: none; height: 15px; background: radial-gradient(circle at 5px 1.500px, #222 1.300px, transparent 1.500px) 0 0 / 9px 5px repeat-y; }
    .tb { width: 22px; height: 25px; flex: none; display: flex; align-items: center; justify-content: center; }
    .tb.wide { width: 28px; justify-content: flex-start; padding-left: 2px; }
    .t4 .tb.wide { width: 29px; }
    .tb.active { background: linear-gradient(#b0804a, #f49a2e); outline: 1px solid #9a6a30; outline-offset: -1px; }
    .arr { width: 0; height: 0; border: 4px solid transparent; border-top: 4px solid #777; border-bottom: 0; margin-left: 2px; }
    .sep { width: 1px; height: 18px; background: #8f949a; margin: 0 2px; flex: none; }
    .tbend { width: 12px; height: 25px; flex: none; background: linear-gradient(90deg, #a0a2a4, #7d7f82); border-radius: 0 3px 3px 0; display: flex; align-items: flex-end; justify-content: center; padding-bottom: 2px; }
    .more { width: 10px; height: 10px; }
    .combo { width: 200px; height: 21px; flex: none; border: 1px solid #8c8c8c; background: #dfdfdf; display: flex; align-items: center; padding-left: 3px; margin: 0 1px 0 1px; color: #111; justify-content: space-between; padding-right: 5px; font-size: 11px; }
    .combo i { border: 3px solid transparent; border-top: 4px solid #666; border-bottom: 0; }
    .mid { height: 1529px; flex: none; display: flex; }
    .vbar { width: 26px; flex: none; padding: 2px 2px 0 2px; display: flex; flex-direction: column; }
    .vsec { width: 22px; background: linear-gradient(90deg, #e8ebee, #b9bdc2); border-radius: 3px; display: flex; flex-direction: column; align-items: center; position: relative; }
    .vsec.a { height: 229px; padding-top: 2px; }
    .vsec.b { height: 311px; margin-top: 4px; padding-top: 2px; }
    .vdots { width: 13px; height: 8px; border-top: 2px dotted #222; margin-top: 3px; flex: none; }
    .vi { height: 22px; width: 22px; flex: none; display: flex; align-items: center; justify-content: center; position: relative; }
    .tfn { position: absolute; right: 0; bottom: 1px; font-size: 10.500px; line-height: 10px; color: #111; }
    .vsep { width: 16px; height: 1px; background: #999; margin: 1px 0 2px; flex: none; }
    .vend { margin-top: auto; width: 22px; height: 8px; background: linear-gradient(#b0b3b6, #7d7f82); border-radius: 0 0 3px 3px; color: #fff; font-size: 7px; line-height: 8px; text-align: right; padding-right: 2px; flex: none; }
    .col { flex: 1; min-width: 0; display: flex; flex-direction: column; }
    .tabrow { height: 23px; flex: none; padding-left: 6px; }
    .otab { width: 104px; height: 21px; background: linear-gradient(#e8eef2, #f6f8fa); border: 1px solid #9fb4bf; border-top: 0; border-radius: 0 0 4px 4px; display: flex; align-items: center; padding-left: 4px; white-space: nowrap; font-size: 11px; }
    .order { height: 124px; flex: none; background: #eee; display: flex; flex-direction: column; }
    .ohead { height: 25px; flex: none; background: linear-gradient(#eceef0, #b7bbc0); border-bottom: 1px solid #9aa0c4; display: flex; align-items: center; padding-left: 6px; color: #444; justify-content: space-between; font-size: 11.800px; }
    .ohead svg { width: 46px; height: 12px; margin-right: 5px; }
    .obody { padding: 4px 0 0 8px; }
    .frow { display: flex; }
    .fld { display: flex; flex-direction: column; }
    .fld label { height: 12px; line-height: 12px; font-size: 11.800px; white-space: nowrap; }
    .ctrl { display: flex; height: 21px; margin-top: 0; }
    .inp { background: #fff; border: 1px solid #777; border-right-color: #ccc; border-bottom-color: #ccc; padding-left: 3px; display: flex; align-items: center; font-size: 11.500px; }
    .sp { width: 16px; height: 21px; background: #e4e4e4; display: flex; flex-direction: column; border: 1px solid #aaa; }
    .sp b { flex: 1; display: flex; align-items: center; justify-content: center; }
    .sp b::before { content: ""; border: 3px solid transparent; border-bottom: 4px solid #333; border-top: 0; }
    .sp b + b { border-top: 1px solid #aaa; }
    .sp b + b::before { border-top: 4px solid #333; border-bottom: 0; }
    .sp.off b::before { opacity: .35; }
    .sel { background: #e2e2e2; border: 1px solid #aaa; display: flex; align-items: center; justify-content: space-between; padding: 0 5px 0 3px; height: 21px; width: 100%; font-size: 11.200px; white-space: nowrap; }
    .sel svg { width: 9px; height: 6px; }
    .dis { background: #eee; border: 1px solid #bbb; flex: 1; }
    .brow { display: flex; margin-top: 8px; height: 20px; align-items: center; position: relative; }
    .bt { height: 20px; display: flex; align-items: center; justify-content: center; flex: none; white-space: nowrap; font-size: 11.200px; }
    .oa { border: 1px solid #1a2a50; border-radius: 3px; }
    .buy { width: 72px; margin-left: 1px; background: linear-gradient(#d0efc8, #88cf88); color: #163a16; }
    .sell { width: 71px; margin-left: 3px; background: linear-gradient(#f6d0d0, #efb0b0); color: #3a1616; }
    .ss { width: 70px; margin-left: 5px; background: linear-gradient(#f6f2cc, #e3dfa0); }
    .btc { width: 72px; margin-left: 4px; background: linear-gradient(#f6f2cc, #e3dfa0); }
    .qv { width: 67px; background: #dcdcdc; border: 1px solid #bcbcbc; }
    .cx { background: #c6c6c6; border: 1px solid #bbb; color: #959595; }
    .rf { width: 23px; height: 22px; margin-left: 16px; background: linear-gradient(#eef2ee, #c8ccc8); border: 1px solid #7f9a9a; border-radius: 2px; display: flex; align-items: center; justify-content: center; flex: none; }
    .ostat { width: 754px; height: 15px; margin-top: 8px; border-top: 1px solid #999; border-bottom: 1px solid #fff; border-right: 1px solid #fff; display: flex; align-items: center; font-size: 11.100px; }
    .gapdark { height: 4px; background: #333; flex: none; }
    .desktop { height: 1354px; flex: none; position: relative; background: #555; box-shadow: inset 4px 5px 0 #c9c9c9, inset 0 -3px 0 #c9c9c9; overflow: hidden; }
    .win { position: absolute; display: flex; flex-direction: column; background: #8d8d8d; padding: 0 4px 2px 5px; }
    .wt { margin: 0 -4px 0 -5px; flex: none; display: flex; align-items: center; padding-left: 5px; color: #ccd0d2; background: linear-gradient(#8a8a8a, #9c9c9c); font-size: 12.500px; border-top: 5px solid #444; border-radius: 4px 4px 0 0; }
    .wt .tit { margin-left: 4px; white-space: nowrap; }
    .ctl { margin-left: auto; color: #bcbcbc; margin-right: 5px; display: flex; }
    .ctlsvg { width: 66px; height: 12px; }
    .wic { width: 15px; height: 15px; }
    .w1 { left: 7px; top: 5px; width: 1329px; height: 542px; padding: 0 3px 3px 2px; --band: #ffd97a; }
    .w1 .wt { height: 37px; margin: 0 -3px 0 -2px; }
    .w1 .bandbox { border-bottom: 0; }
    .w2 { left: 1339px; top: 5px; width: 955px; height: 393px; --band: #bfcf9c; }
    .w2 .wt, .w3 .wt { height: 33px; }
    .w3 { left: 1339px; top: 402px; width: 955px; height: 459px; --band: #f0a2a2; }
    .w4 { left: 1339px; top: 862px; width: 955px; height: 478px; --band: #f0a2a2; }
    .w4 .wt { height: 23px; border-top: 0; }
    .w5 { left: 750px; top: 554px; width: 591px; height: 794px; --band: #bbaae6; }
    .w5 .wt { height: 31px; border-top-width: 3px; }
    .w6 { left: 7px; top: 922px; width: 737px; height: 430px; padding: 0 3px 2px 5px; }
    .w6 .wt { height: 30px; margin: 0 -3px 0 -5px; border-top: 0; }
    .tabs { height: 23px; flex: none; display: flex; align-items: flex-end; padding-left: 7px; background: linear-gradient(#f7f7f7, #e6e6e6); }
    .tab { height: 20px; display: flex; align-items: center; gap: 3px; padding: 0 2px 0 4px; border: 1px solid #b0b0b0; border-bottom: 0; border-radius: 4px 4px 0 0; position: relative; white-space: nowrap; font-size: 11px; margin-right: 1px; }
    .tic { width: 14px; height: 15px; flex: none; }
    .ts { padding-left: 20px; padding-right: 3px; background: linear-gradient(#edf0f5, #8eb0e4); clip-path: polygon(18px 0, 100% 0, 100% 100%, 0 100%); }
    .tc { background: linear-gradient(#fdf2ce, #ffdd88); padding-right: 4px; }
    .tr { background: linear-gradient(#e6ecd4, #c4d3a0); padding-right: 4px; }
    .ta { background: linear-gradient(#f8d4d4, #f3a3a3); padding-right: 4px; }
    .tt { background: linear-gradient(#e4e0f5, #bbaee8); padding-right: 5px; }
    .tab.on { margin-left: -14px; padding-left: 16px; clip-path: polygon(15px 0, 100% 0, 100% 100%, 0 100%); z-index: 1; }
    .bandbox { flex: 1; min-height: 0; border: 4px solid var(--band); background: #fff; display: flex; flex-direction: column; overflow: hidden; }
    .plot { display: block; flex: none; }
    .grid path { stroke: #c6c6c6; stroke-dasharray: 4 3; fill: none; stroke-width: 1; }
    .gridh path { stroke: #8f8f8f; stroke-dasharray: 3 2; fill: none; stroke-width: 1; }
    .axis { stroke: #bdbdbd; fill: none; stroke-width: 1; }
    .up { stroke: #0aa00a; fill: none; stroke-width: 1.400; shape-rendering: crispEdges; }
    .dn { stroke: #b00d16; fill: none; stroke-width: 1.400; shape-rendering: crispEdges; }
    .chev { fill: none; stroke: #fff; stroke-width: 1.500; }
    .t { font: 12.400px "Liberation Sans", Arial, sans-serif; fill: #111; }
    .navy { fill: #12125e; }
    .lhead { height: 18px; flex: none; background: linear-gradient(#fbfbfc, #d7d9dc); border-bottom: 2px solid #8a8a90; display: flex; }
    .lhead span { border-right: 1px solid #7880a0; height: 14px; margin-top: 1px; flex: none; }
    .repgrid { width: 815px; border-right: 1px solid #aaa; border-bottom: 2px solid #aaa; }
    .rr { display: grid; grid-template-columns: 249px 171px 295px 100px; height: 19px; align-items: center; background: #fafafa; }
    .rr:nth-child(odd) { background: #ebebeb; }
    .rr span { padding-left: 3px; white-space: nowrap; }
    .rr .g { color: #16b016; } .rr .r { color: #d01020; }
    .actwrap { flex: 1; min-height: 0; display: flex; background: #fff; }
    .actl { width: 551px; flex: none; display: flex; flex-direction: column; }
    .ahead { height: 18px; flex: none; display: grid; grid-template-columns: 149px 400px; background: linear-gradient(#fbfbfc, #d7d9dc); border-bottom: 2px solid #8a8a90; text-align: center; line-height: 18px; }
    .ahead span + span { border-left: 1px solid #7880a0; }
    .ar { height: 19px; flex: none; display: grid; grid-template-columns: 149px 400px; align-items: center; background: #fafafa; }
    .ar:nth-child(odd) { background: #ebebeb; }
    .ar span { padding-left: 3px; white-space: nowrap; } .ar span + span { padding-left: 4px; }
    .scroll { width: 19px; flex: none; background: linear-gradient(90deg,#e9e9e9,#f4f4f4); display: flex; flex-direction: column; align-items: center; border-left: 1px solid #c8c8c8; }
    .scroll i { flex: none; border: 4px solid transparent; }
    .sup { border-bottom: 5px solid #444 !important; border-top: 0 !important; margin-top: 5px; }
    .sdn { border-top: 5px solid #444 !important; border-bottom: 0 !important; margin-top: auto; margin-bottom: 6px; }
    .thumb { width: 15px; height: 470px; margin-top: 7px; background: linear-gradient(90deg, #f6f6f6, #cfd2d5); border: 1px solid #bbb; flex: none; border-radius: 2px; }
    .dlg { position: absolute; left: 13px; top: 549px; width: 730px; height: 388px; background: #e9e9e9; border: 2px solid #4a4a4a; border-top: 0; border-radius: 5px 5px 0 0; display: flex; flex-direction: column; box-shadow: 0 0 3px #222; font-size: 11px; }
    .dt { height: 30px; flex: none; margin: 0 -2px; background: linear-gradient(#1c1c1c, #4c4c4c 35%, #262626); border-radius: 5px 5px 0 0; color: #fff; font-size: 12.600px; display: flex; align-items: center; padding: 6px 0 0 7px; }
    .dt .x { margin-left: auto; margin-right: 10px; color: #bbb; font-weight: bold; }
    .dt .tit { margin-left: 4px; }
    .group { margin: 18px 13px 0 14px; height: 291px; border: 1px solid #8d8d8d; border-radius: 4px; position: relative; display: flex; padding: 10px 3px 0 7px; }
    .legend { position: absolute; left: 5px; top: -7px; background: #e9e9e9; padding: 0 5px 0 2px; line-height: 13px; }
    .dl { width: 609px; height: 271px; background: #fff; border: 1px solid #6f6f6f; flex: none; padding-top: 1px; }
    .dh { display: grid; grid-template-columns: 201px 81px 50px 149px 100px 1fr; height: 23px; background: linear-gradient(#f6f6f8, #d6d8dc); border-bottom: 2px solid #7c7f88; margin-bottom: 1px; }
    .dh span { border-right: 1px solid #6f78a0; padding-left: 9px; line-height: 21px; height: 21px; white-space: nowrap; }
    .dh span:last-child { border: 0; }
    .dr { display: grid; grid-template-columns: 201px 81px 50px 149px 1fr; height: 17px; align-items: center; }
    .dr span { padding-left: 6px; white-space: nowrap; display: flex; align-items: center; }
    .dr span:first-child { padding-left: 8px; gap: 5px; }
    .play { width: 0; height: 0; border-left: 8px solid #28a010; border-top: 6px solid transparent; border-bottom: 6px solid transparent; flex: none; }
    .dside { width: 75px; margin-left: 3px; flex: none; }
    .db { height: 21px; background: linear-gradient(#f2f2f2 50%, #c9c9c9 50%); border: 1px solid #dcdcdc; color: #a2a2a2; display: flex; align-items: center; justify-content: center; margin-bottom: 3px; border-radius: 2px; }
    .dfoot { display: flex; justify-content: flex-end; padding: 11px 14px 0 0; }
    .done { width: 74px; height: 22px; background: linear-gradient(#f0f2f4, #cdd5da); border: 1px solid #e4cf7a; border-radius: 2px; display: flex; align-items: center; justify-content: center; }
    .dgrip { position: absolute; right: 1px; bottom: 1px; width: 11px; height: 11px; background: radial-gradient(circle at 1.500px 1.500px, #666 1px, transparent 1.200px) 0 0 / 4px 4px; }
    .pagebar { height: 24px; flex: none; display: flex; padding: 1px 0 0 6px; justify-content: space-between; color: #ddd; }
    .ptab { width: 50px; height: 21px; background: linear-gradient(#dcdfe2, #f7f8f9); border: 1px solid #bfc6ca; border-top: 0; border-radius: 0 0 4px 4px; color: #111; font-weight: bold; display: flex; align-items: center; justify-content: center; font-size: 11.500px; }
    .pnav { display: flex; gap: 5px; align-items: center; padding-right: 3px; color: #eee; font-size: 12px; height: 22px; }
    .pnav i { width: 0; height: 0; border: 5px solid transparent; }
    .pnav i:first-child { border-right: 6px solid #ccc; border-left: 0; }
    .pnav i:nth-child(2) { border-left: 6px solid #ccc; border-right: 0; }
    .status { height: 23px; flex: none; background: linear-gradient(#41485a 0, #3b4050 30%, #343434 33%, #2e2e2e); color: #eee; display: flex; font-size: 10.700px; }
    .ready { padding: 9px 0 0 3px; width: 1186px; flex: none; line-height: 13px; font-size: 12px; }
    .sright { flex: 1; display: flex; align-items: center; padding-left: 5px; background: linear-gradient(#5a6070, #555a68 40%, #4a4d55); color: #d8dde0; white-space: nowrap; }
    .chip { height: 17px; background: #f2fff2; color: #0c6a1c; display: flex; align-items: center; gap: 3px; padding-left: 3px; margin-right: 4px; flex: none; overflow: hidden; }
    .chip .ic { width: 14px; height: 14px; }
    .c1 { width: 182px; } .c2 { width: 192px; } .c3 { width: 172px; margin-right: 6px; } .c4 { width: 82px; }
    .dot { width: 8px; height: 12px; border-radius: 50%; background: radial-gradient(circle at 40% 30%, #b6f59a, #1fa81f 70%); flex: none; margin: 0 3px 0 13px; }
    .sgrip { margin-left: auto; width: 10px; height: 10px; margin-right: 3px; background: radial-gradient(circle at 1.500px 1.500px, #aaa 1px, transparent 1.200px) 0 0 / 4px 4px; flex: none; }
  `;

  render() {
    const ys4 = Array.from({ length: 9 }, (_, i) => 1150 + i * 50.25);
    const ys3 = [700, 747, 794, 841, 888, 935, 982, 1029, 1077];
    const chevron = html`<svg viewBox="0 0 9 6"><path d="M1 1l3.500 4L8 1" fill="none" stroke="#555"/></svg>`;
    return html`<div class="page">
      <div class="titlebar">
        <svg class="logo" viewBox="0 0 16 20"><path d="M1 2l13-2M2 5l11-2M3 8l9-1.500M4 11l7-1M5 14l5-1M6 17l3-.5" stroke="#2f87c8" stroke-width="1.500" fill="none"/></svg>
        <span>ActiveTick - Chart1</span>
        <div class="sysctl"><span><svg viewBox="0 0 12 12"><path d="M0 6h12" stroke="#777"/></svg></span><span><svg viewBox="0 0 12 12"><path d="M1.500 1.500h9v9h-9z" fill="none" stroke="#777"/></svg></span><span><svg viewBox="0 0 12 12"><path d="M1 1l10 10M11 1L1 11" stroke="#777"/></svg></span></div>
      </div>
      <div class="menubar"><i class="mgrip"></i>${["File","View","Workspace","Chart","Trading","Tools","Window","Help"].map((m) => html`<span>${m}</span>`)}</div>
      <div class="tools">
        <div class="tbar"><i class="grip"></i><span class="tb wide">${ic("newdoc")}<i class="arr"></i></span>${sep}<span class="combo"><span>Type symbol(s)...</span><i></i></span>${sep}
          ${btn("stack")}${btn("floppyG")}${sep}${btn("winplus")}${btn("folderdoc")}${btn("floppyB")}${btn("docmag")}${sep}${btn("printer")}${sep}${btn("person")}${tbEnd}</div>
        <div class="tbar"><i class="grip"></i>${["chartwin","calc","greentile","docclock","star","heat","tree","colorgrid","listc"].map((n) => btn(n))}${tbEnd}</div>
        <div class="tbar t3"><i class="grip"></i>${btn("pie")}${btn("folders")}${btn("calclock")}${sep}${btn("winarrows")}${btn("check","active")}${btn("winarrow")}${sep}${btn("docrefresh")}${tbEnd}</div>
        <div class="tbar t4"><i class="grip"></i>${wideBtn("docgauge")}${sep}${wideBtn("chartplus")}${wideBtn("rulerpen")}${sep}${btn("bars")}${btn("candles")}${btn("line")}${sep}${btn("zoomin")}${btn("zoomout")}${btn("cross")}${sep}${btn("hammer")}${sep}${btn("notes")}${btn("pencil")}${tbEnd}</div>
      </div>
      <div class="mid">
        <div class="vbar">
          <div class="vsec a"><i class="vdots"></i>
            ${this.tf("T")}<i class="vsep"></i>${["1","5","10","15","30","60"].map((n) => this.tf(n))}<i class="vsep"></i>${this.tf("D")}${this.tf("W")}
            <div class="vend">▸</div>
          </div>
          <div class="vsec b"><i class="vdots"></i>
            ${["seg","seg2","vert","horz"].map((n) => html`<span class="vi">${ic(n)}</span>`)}<i class="vsep"></i>
            ${["target","fan","fib","vlines"].map((n) => html`<span class="vi">${ic(n)}</span>`)}<i class="vsep"></i>
            <span class="vi">${ic("speed")}</span><i class="vsep"></i><span class="vi">${ic("fork")}</span><i class="vsep"></i>
            <span class="vi">${ic("oval")}</span><span class="vi">${ic("rect")}</span>
            <div class="vend">▸</div>
          </div>
        </div>
        <div class="col">
          <div class="tabrow"><div class="otab">Option Order Entry</div></div>
          <div class="order">
            <div class="ohead"><span>Equity Order Entry</span><svg viewBox="0 0 46 12"><path d="M2 4h8l-4 5z" fill="#222"/><path d="M19 2h6M20 2v5h4V2M18 7h8M22 7v4" stroke="#222" fill="none"/><path d="M37 2l7 7M44 2l-7 7" stroke="#222" stroke-width="1.600"/></svg></div>
            <div class="obody">
              <div class="frow">
                <div class="fld" style="width:149px"><label>Symbol</label><div class="ctrl"><span class="inp" style="width:105px"></span><span style="width:19px;background:#c6c6c6;margin-left:1px"></span><span class="sel" style="width:20px;margin-left:4px;justify-content:center;padding:0;background:#dcdcdc">#</span></div></div>
                <div class="fld" style="width:76px"><label>Quantity</label><div class="ctrl"><span class="inp" style="width:57px">100</span><span class="sp"><b></b><b></b></span></div></div>
                <div class="fld" style="width:98px"><label>Order Type</label><div class="ctrl"><span class="sel">Market${chevron}</span></div></div>
                <div class="fld" style="width:67px;margin-left:4px"><label>Limit Price</label><div class="ctrl"><span class="dis"></span><span class="sp off"><b></b><b></b></span></div></div>
                <div class="fld" style="width:67px;margin-left:4px"><label>Stop Price</label><div class="ctrl"><span class="dis"></span><span class="sp off"><b></b><b></b></span></div></div>
                <div class="fld" style="width:66px;margin-left:5px"><label>Duration</label><div class="ctrl"><span class="sel">Day${chevron}</span></div></div>
                <div class="fld" style="width:215px;margin-left:4px"><label>Account</label><div class="ctrl"><span class="sel">Test Account - Virtual${chevron}</span></div></div>
              </div>
              <div class="brow">
                <span class="bt oa buy">Buy</span><span class="bt oa sell">Sell</span><span class="bt oa ss">Sell Short</span><span class="bt oa btc">Buy to Cover</span>
                <span class="bt qv" style="margin-left:30px">B: 0.00</span><span class="bt qv" style="margin-left:5px">A: 0.00</span><span class="bt qv" style="margin-left:5px;width:65px">L: 0.00</span>
                <span class="bt cx" style="width:84px;margin-left:4px">Cancel</span><span class="bt cx" style="width:87px;margin-left:4px">Modify</span>
                <span class="rf">${ic("refresh")}</span>
              </div>
              <div class="ostat">Errors occured: Insufficient buying power</div>
            </div>
          </div>
          <div class="gapdark"></div>
          <div class="desktop">
            <section class="win w1">
              ${this.tbar("Trading System1 [SPY - SPDR S&P 500]")}${tabs(1)}
              <div class="bandbox">${spyChart()}</div>
            </section>
            <section class="win w2">
              ${this.tbar("Trading System2")}${tabs(2)}
              <div class="bandbox">
                <div class="lhead"><span style="width:249px"></span><span style="width:171px"></span><span style="width:295px"></span><span style="width:100px"></span></div>
                <div class="repgrid">${REPORT.map((r) => html`<div class="rr"><span>${r[0]}</span><span class=${r[4] || ""}>${r[1]}</span><span>${r[2]}</span><span>${r[3]}</span></div>`)}</div>
              </div>
            </section>
            <section class="win w3">
              ${this.tbar("Trading System3")}${tabs(3)}
              <div class="bandbox">${acctChart(692, 1085, acct3, ys3, ["100212.21","100132.36","100052.51","99972.66","99892.81","99812.96","99733.11","99653.26","99573.41"], 716)}</div>
            </section>
            <section class="win w4">
              ${this.tbar("Trading System4")}${tabs(3)}
              <div class="bandbox">${acctChart(1142, 1562, acct4, ys4, ["100562.22","100438.21","100314.21","100190.20","100066.20","99942.19","99818.18","99694.18","99570.17"], 1167)}</div>
            </section>
            <section class="win w6">
              ${this.tbar("Chart1 [$DJI]", "chartwin")}
              ${djiChart()}
            </section>
            <section class="win w5">
              ${this.tbar("Trading System5")}${tabs(4)}
              <div class="bandbox">
                <div class="actwrap">
                  <div class="actl">
                    <div class="ahead"><span>Time</span><span>Activity</span></div>
                    <div>${ACT.map((a) => html`<div class="ar"><span>${a[0]} ${a[1]}:00.000</span><span>${a[2]} 100.00 QQQ @ ${a[3]}</span></div>`)}</div>
                  </div>
                  <div class="scroll"><i class="sup"></i><div class="thumb"></div><i class="sdn"></i></div>
                </div>
              </div>
            </section>
            <section class="dlg">
              <div class="dt">${ic("win","wic")}<span class="tit">Running Trading Systems Dialog</span><span class="x">X</span></div>
              <div class="group"><span class="legend">Trading Systems</span>
                <div class="dl">
                  <div class="dh"><span>Trading System</span><span>Status</span><span>Symbol</span><span>Account</span><span>Interval Period</span><span></span></div>
                  ${[["DIA"],["AAPL"]].map((s) => html`<div class="dr"><span><i class="play"></i>Moving Average System.js</span><span>Running</span><span>${s[0]}</span><span>Test Account - Virtual</span><span>1 Minute Intraday</span></div>`)}
                </div>
                <div class="dside"><div class="db">Pause</div><div class="db">Resume</div><div class="db" style="margin-top:20px">Delete</div></div>
              </div>
              <div class="dfoot"><div class="done">Done</div></div>
              <i class="dgrip"></i>
            </section>
          </div>
          <div class="pagebar"><div class="ptab">Page 1</div><div class="pnav"><i></i><i></i><span>X</span></div></div>
        </div>
      </div>
      <div class="status">
        <div class="ready">Ready</div>
        <div class="sright">
          <div class="chip c1">${ic("uparrow")}$DJI 30687.47 +475.56(+1.57%)</div>
          <div class="chip c2">${ic("uparrow")}$NASX 13612.78 +209.39(+1.56%)</div>
          <div class="chip c3">${ic("uparrow")}$SPX 3826.31 +52.45(+1.39%)</div>
          <span style="width:101px">Acct: Test Account</span><span style="width:71px">BP: $2033.00</span>
          <div class="chip c4">P&L: +$6379.10</div>
          <i class="dot" style="margin-left:9px"></i><span>Virtual</span><i class="dot"></i><span style="width:172px">ActiveTick (0.00KB/s Q000/T000)</span><span>02:38:31</span><i class="sgrip"></i>
        </div>
      </div>
    </div>`;
  }
  tf(n: string) {
    return html`<span class="vi">${ic("tf")}<span class="tfn">${n}</span></span>`;
  }
  tbar(t: string, icon = "win") {
    return html`<div class="wt">${ic(icon, "wic")}<span class="tit">${t}</span>${winCtl}</div>`;
  }
}
